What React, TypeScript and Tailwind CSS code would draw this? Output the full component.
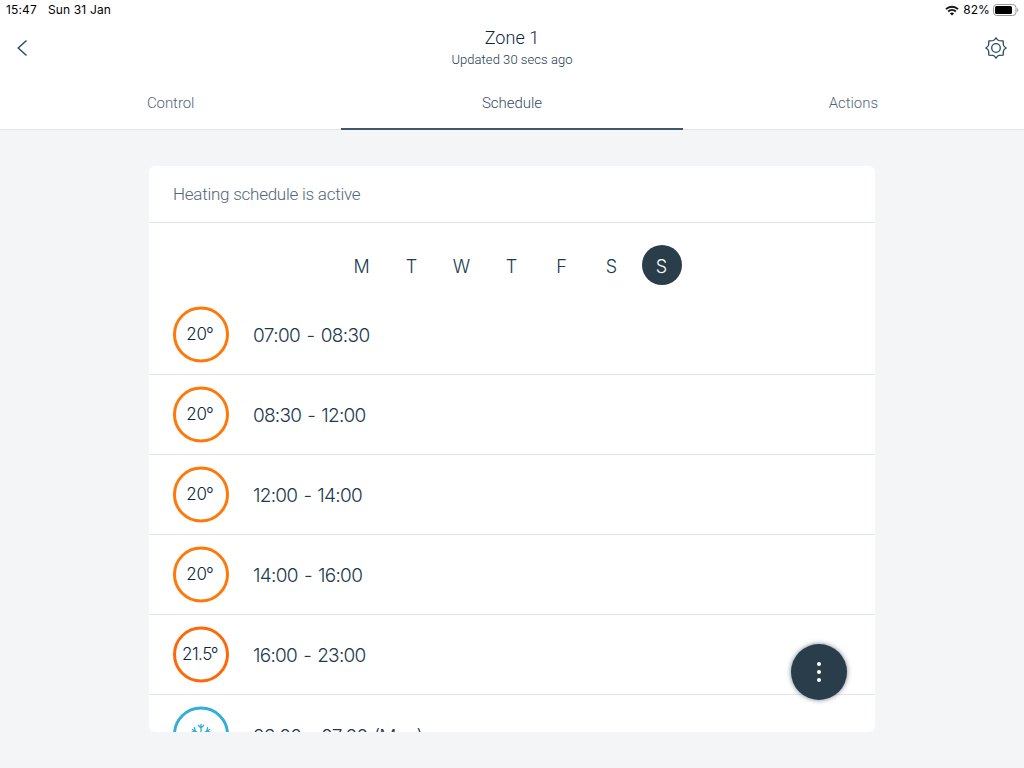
import React from 'react';

type Slot = { temp: string | null; time: string; ring: string; tempClass: string; timeClass: string };

const orange = 'border-[#ff780a]';
const slots: Slot[] = [
  { temp: '20', time: '07:00 - 08:30', ring: orange, tempClass: '', timeClass: 'pt-[3px] tracking-[-0.6px]' },
  { temp: '20', time: '08:30 - 12:00', ring: orange, tempClass: '', timeClass: 'pt-[3px] tracking-[-0.74px]' },
  { temp: '20', time: '12:00 - 14:00', ring: orange, tempClass: '', timeClass: 'pt-[3px] tracking-[-0.74px]' },
  { temp: '20', time: '14:00 - 16:00', ring: orange, tempClass: '', timeClass: 'pt-[3px] tracking-[-0.7px]' },
  { temp: '21.5', time: '16:00 - 23:00', ring: 'border-[#ff6708]', tempClass: 'tracking-[-0.5px]', timeClass: 'pt-[3px] tracking-[-0.73px]' },
  { temp: null, time: '23:00 - 07:00 (Mon)', ring: 'border-[#32aed8]', tempClass: '', timeClass: 'pt-[5px] tracking-[-0.78px]' },
];

const days = ['M', 'T', 'W', 'T', 'F', 'S', 'S'];

function Wifi() {
  return (
    <svg width="14" height="11" viewBox="0 0 14 11" fill="none" stroke="#111" strokeWidth="1.9">
      <path d="M1 4.1C4.4.9 9.6.9 13 4.1" />
      <path d="M3.2 6.5c2.2-2 5.4-2 7.6 0" />
      <path d="M7 10.6 4.9 8.4c1.2-1.1 3-1.1 4.2 0z" fill="#111" stroke="none" />
    </svg>
  );
}

function Battery() {
  return (
    <svg width="26" height="12" viewBox="0 0 26 12">
      <rect x=".5" y=".5" width="22.5" height="11" rx="3.2" fill="none" stroke="#999" />
      <rect x="2" y="2" width="17" height="8" rx="1.6" fill="#000" />
      <path d="M24.2 4v4c1.5-.7 1.5-3.300 0-4z" fill="#999" />
    </svg>
  );
}

function Gear() {
  return (
    <svg width="22" height="22" viewBox="0 0 22 22" fill="none" stroke="#29495f" strokeWidth="1.3" strokeLinejoin="round">
      <path d="M11 .8Q12.300 3.300 14 3.600L18.100 3.900 18.400 8Q18.700 9.700 21.200 11 18.700 12.300 18.400 14L18.100 18.100 14 18.400Q12.300 18.700 11 21.200 9.700 18.700 8 18.400L3.900 18.100 3.600 14Q3.300 12.300.8 11 3.300 9.700 3.600 8L3.900 3.900 8 3.600Q9.700 3.300 11 .8Z" />
      <circle cx="11" cy="11" r="4.300" />
    </svg>
  );
}

function Snowflake() {
  return (
    <svg width="20" height="22" viewBox="-10 -11 20 22" fill="none" stroke="#32aed8" strokeWidth="1.3">
      {[0, 60, 120, 180, 240, 300].map((a) => (
        <path key={a} transform={`rotate(${a})`} d="M0 0V-10.500M-3-9.500 0-6.500 3-9.500" />
      ))}
    </svg>
  );
}

export default function App() {
  return (
    <div className="flex h-[768px] w-[1024px] flex-col overflow-hidden bg-[#f3f5f7] font-['Inter',sans-serif] text-[#203a50]">
      <header className="flex h-[130px] shrink-0 flex-col border-b border-[#e1e5e8] bg-white">
        <div className="flex h-5 shrink-0 items-center justify-between pl-1.5 pr-[5px] text-[12px] leading-5 text-black">
          <div className="flex gap-[11px] tracking-[0.15px]">
            <span>15:47</span>
            <span>Sun 31 Jan</span>
          </div>
          <div className="flex items-center">
            <Wifi />
            <span className="ml-1 mr-[3px] tracking-[0.1px]">82%</span>
            <Battery />
          </div>
        </div>
        <div className="flex h-[56px] shrink-0 items-center justify-between pl-4 pr-[17px]">
          <button aria-label="Back" className="w-[22px]">
            <svg width="12" height="18" viewBox="0 0 12 18" fill="none" stroke="#29495f" strokeWidth="1.4">
              <path d="M10.500 1.500 2.200 9l8.300 7.500" />
            </svg>
          </button>
          <div className="flex flex-col items-center pl-px pt-px font-['Roboto',sans-serif]">
            <h1 className="text-[18px] font-light leading-[22px] tracking-[0.05px] text-[#0b2740]">Zone 1</h1>
            <p className="pt-px text-[13px] font-light leading-5 tracking-[0.05px]">Updated 30 secs ago</p>
          </div>
          <button aria-label="Settings"><Gear /></button>
        </div>
        <nav className="grid h-[54px] shrink-0 grid-cols-3 text-center font-['Roboto',sans-serif] text-[15px] font-light leading-[48px] tracking-[-0.05px] text-[#526779]">
          <span className="pt-[3px]">Control</span>
          <span className="border-b-2 border-[#40566b] pt-[3px] text-[#344d62]">Schedule</span>
          <span className="pt-[3px]">Actions</span>
        </nav>
      </header>

      <main className="relative ml-[149px] mt-9 h-[566px] w-[726px] overflow-hidden rounded-[6px] bg-white">
        <h2 className="h-[57px] border-b border-[#e1e5e8] px-6 font-['Roboto',sans-serif] text-[17px] font-light leading-[57px] tracking-[-0.25px] text-[#526779]">
          Heating schedule is active
        </h2>
        <div className="flex h-[72px] justify-center gap-2.5 pt-[22px]">
          {days.map((d, i) => (
            <span
              key={i}
              className={
                i === 6
                  ? "flex h-10 w-10 items-center justify-center rounded-full bg-[#293e4a] pr-px pt-0.5 text-[18px] font-light text-white"
                  : "flex h-10 w-10 items-center justify-center pr-px pt-0.5 text-[18px] font-light"
              }
            >
              {d}
            </span>
          ))}
        </div>
        {slots.map((s) => (
          <div key={s.time} className="flex h-20 items-center border-b border-[#e1e5e8] px-6 pb-px">
            <div className={`flex h-14 w-14 translate-y-[0.5px] items-center justify-center rounded-full border-3 ${s.ring}`}>
              {s.temp ? (
                <span className={`-ml-0.5 -mt-0.5 flex text-[17px] font-light leading-6 text-[#0b2740] ${s.tempClass}`}>
                  {s.temp}<span className="-ml-px">°</span>
                </span>
              ) : (
                <Snowflake />
              )}
            </div>
            <span className={`ml-6 text-[19px] font-light leading-6 [word-spacing:1.5px] ${s.timeClass}`}>{s.time}</span>
          </div>
        ))}
        <button
          aria-label="More options"
          className="absolute left-[642px] top-[478px] flex h-14 w-14 flex-col items-center justify-center gap-1 rounded-full bg-[#293e4a] shadow-[0_0_5px_rgba(41,62,74,0.65)]"
        >
          <span className="h-1 w-1 rounded-full bg-white" />
          <span className="h-1 w-1 rounded-full bg-white" />
          <span className="h-1 w-1 rounded-full bg-white" />
        </button>
      </main>
    </div>
  );
}
